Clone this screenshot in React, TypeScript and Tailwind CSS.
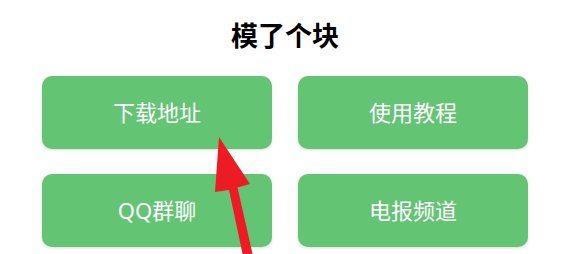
const items = ["下载地址", "使用教程", "QQ群聊", "电报频道"]

export default function App() {
  return (
    <div
      className="relative h-[254px] w-[574px] overflow-hidden bg-white"
      style={{ fontFamily: '"Noto Sans", "Noto Sans CJK SC", sans-serif' }}
    >
      <div className="w-[570px]">
        <h1 className="pt-[17px] text-center text-[27px] font-bold leading-[37px] text-black">模了个块</h1>

        <div className="mt-[22px] grid grid-cols-[230px_230px] gap-x-[26px] gap-y-[25px] pl-[42px]">
          {items.map((label) => (
            <button
              key={label}
              className="flex h-[73px] items-center justify-center rounded-[10px] bg-[#63c574] text-[22px] font-normal text-white shadow-[0_1px_3px_rgba(0,0,0,0.15)]"
            >
              {label}
            </button>
          ))}
        </div>
      </div>

      {/* red pointer arrow */}
      <svg className="pointer-events-none absolute left-0 top-0" width="574" height="254" viewBox="0 0 574 254">
        <polygon
          points="219,137 250,184 237.5,187.5 253,256 243,256 229,190 215,192"
          fill="#ed1c24"
        />
      </svg>
    </div>
  )
}
